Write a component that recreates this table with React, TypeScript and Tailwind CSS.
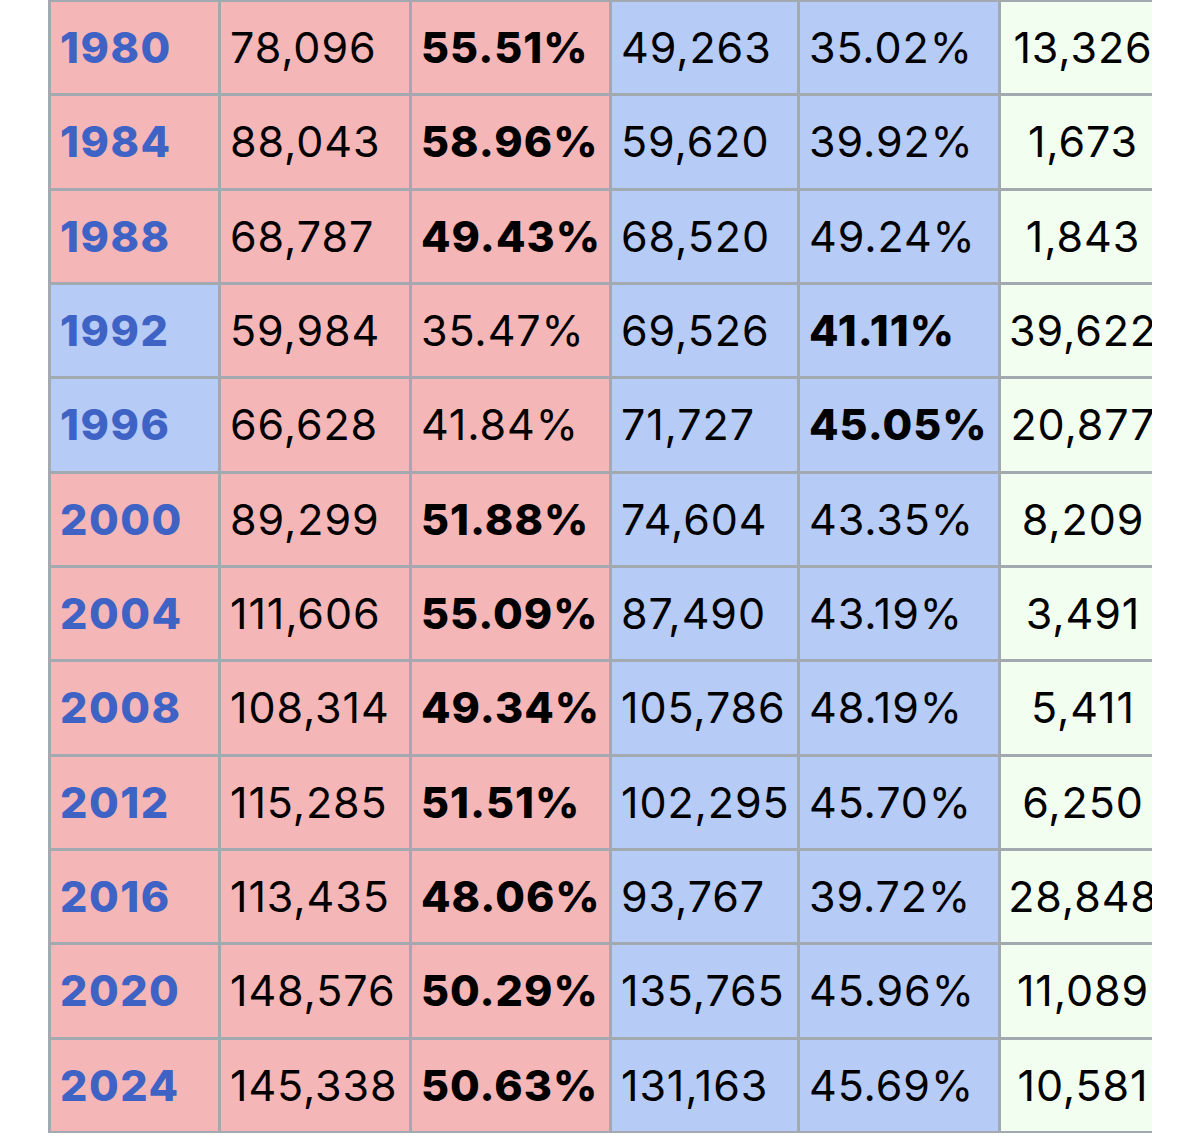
import React from "react";

type Party = "r" | "d";
type Row = {
  year: string;
  yc: Party;
  rv: string;
  rp: string;
  rBold: boolean;
  dv: string;
  dp: string;
  dBold: boolean;
  o: string;
};

const rows: Row[] = [
  { year: "1980", yc: "r", rv: "78,096", rp: "55.51%", rBold: true, dv: "49,263", dp: "35.02%", dBold: false, o: "13,326" },
  { year: "1984", yc: "r", rv: "88,043", rp: "58.96%", rBold: true, dv: "59,620", dp: "39.92%", dBold: false, o: "1,673" },
  { year: "1988", yc: "r", rv: "68,787", rp: "49.43%", rBold: true, dv: "68,520", dp: "49.24%", dBold: false, o: "1,843" },
  { year: "1992", yc: "d", rv: "59,984", rp: "35.47%", rBold: false, dv: "69,526", dp: "41.11%", dBold: true, o: "39,622" },
  { year: "1996", yc: "d", rv: "66,628", rp: "41.84%", rBold: false, dv: "71,727", dp: "45.05%", dBold: true, o: "20,877" },
  { year: "2000", yc: "r", rv: "89,299", rp: "51.88%", rBold: true, dv: "74,604", dp: "43.35%", dBold: false, o: "8,209" },
  { year: "2004", yc: "r", rv: "111,606", rp: "55.09%", rBold: true, dv: "87,490", dp: "43.19%", dBold: false, o: "3,491" },
  { year: "2008", yc: "r", rv: "108,314", rp: "49.34%", rBold: true, dv: "105,786", dp: "48.19%", dBold: false, o: "5,411" },
  { year: "2012", yc: "r", rv: "115,285", rp: "51.51%", rBold: true, dv: "102,295", dp: "45.70%", dBold: false, o: "6,250" },
  { year: "2016", yc: "r", rv: "113,435", rp: "48.06%", rBold: true, dv: "93,767", dp: "39.72%", dBold: false, o: "28,848" },
  { year: "2020", yc: "r", rv: "148,576", rp: "50.29%", rBold: true, dv: "135,765", dp: "45.96%", dBold: false, o: "11,089" },
  { year: "2024", yc: "r", rv: "145,338", rp: "50.63%", rBold: true, dv: "131,163", dp: "45.69%", dBold: false, o: "10,581" },
];

const cellBase = "flex items-center h-[91.33px] pl-[9px] whitespace-nowrap";
const reg = "font-normal tracking-[0.9px]";
const bold = "font-extrabold tracking-[1px]";

export default function App() {
  return (
    <div
      className="w-[1200px] h-[1145px] bg-white overflow-hidden text-[43px] leading-none text-black"
      style={{ fontFamily: "Inter, 'Liberation Sans', sans-serif" }}
    >
      <div className="ml-[48px] w-[1104px] overflow-hidden bg-[#a2a9b1] pt-[2px] pl-[3px] pb-[2px]">
        <div className="grid grid-cols-[167px_188px_197px_185px_198px_200px] gap-[3px]">
          {rows.map((r) => (
            <React.Fragment key={r.year}>
              <div
                className={`${cellBase} font-extrabold tracking-[1.5px] text-[#3f63c5] ${
                  r.yc === "r" ? "bg-[#f4b6b7]" : "bg-[#b6cbf6]"
                }`}
              >
                {r.year}
              </div>
              <div className={`${cellBase} ${reg} bg-[#f4b6b7]`}>{r.rv}</div>
              <div className={`${cellBase} bg-[#f4b6b7] ${r.rBold ? bold : reg}`}>{r.rp}</div>
              <div className={`${cellBase} ${reg} bg-[#b6cbf6]`}>{r.dv}</div>
              <div className={`${cellBase} bg-[#b6cbf6] ${r.dBold ? bold : reg}`}>{r.dp}</div>
              <div className={`flex items-center justify-center h-[91.33px] bg-[#f2fff0] whitespace-nowrap pr-[36px] ${reg}`}>
                {r.o}
              </div>
            </React.Fragment>
          ))}
        </div>
      </div>
    </div>
  );
}
